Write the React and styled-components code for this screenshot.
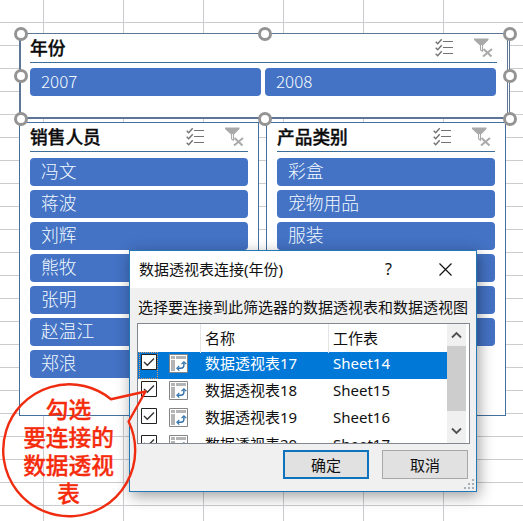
import React from 'react';
import styled, { createGlobalStyle } from 'styled-components';

const GlobalStyle = createGlobalStyle`
  * { box-sizing: border-box; }
  body { margin: 0; overflow: hidden; }
`;

const Worksheet = styled.main`
  position: relative;
  width: 523px;
  height: 521px;
  overflow: hidden;
  padding: 33px 0 0 19px;
  font-family: 'Noto Sans CJK SC', sans-serif;
  background-color: #fff;
  background-image:
    linear-gradient(90deg, #cbccd0 1px, transparent 1px),
    linear-gradient(#cbccd0 1px, transparent 1px);
  background-size: 80px 100%, 100% 23px;
  background-position: 43px 0, 0 22px;
`;

const SlicerRow = styled.div`
  display: flex;
  gap: 7px;
  margin-top: 3px;
`;

const Slicer = styled.section`
  position: relative;
  width: ${({ $wide }) => ($wide ? '491px' : '240px')};
  height: ${({ $wide }) => ($wide ? '86px' : '294px')};
  padding: 0 10px;
  background: #fff;
  border: 1px solid #44709f;
  ${({ $wide }) => $wide && `
    border-width: 1px 3px 2px 2px;
    border-style: solid double solid solid;
    border-color: #5d7695;
    padding: 0 10px 0 9px;
  `}
`;

const SlicerHeader = styled.header`
  display: flex;
  align-items: center;
  height: 29px;
  border-bottom: 1px solid #3f6f99;
`;

const SlicerTitle = styled.h2`
  flex: 1;
  margin: 0;
  padding-bottom: 2px;
  font-size: 17.7px;
  line-height: 26px;
  font-weight: 500;
  -webkit-text-stroke: 0.35px #0b0b0b;
  color: #0b0b0b;
`;

const HeaderIcons = styled.div`
  display: flex;
  gap: 20px;
  padding-right: 4px;
`;

const ItemList = styled.div`
  display: grid;
  grid-template-columns: repeat(${({ $columns }) => $columns}, 1fr);
  gap: 4px;
  margin-top: ${({ $columns }) => ($columns > 1 ? '5px' : '6px')};
  margin-right: ${({ $columns }) => ($columns > 1 ? '1px' : '0')};
`;

const SlicerItem = styled.button`
  height: 28px;
  border: 0;
  border-radius: 4px;
  padding: 0 0 3px 11px;
  background: #4472c4;
  color: #f2faff;
  font: 300 ${({ $compact }) => ($compact ? '17px' : '17.8px')}/25px 'Noto Sans CJK SC', sans-serif;
  text-align: left;
`;

const Handle = styled.i`
  position: absolute;
  left: ${({ $x }) => $x}px;
  top: ${({ $y }) => $y}px;
  width: 14px;
  height: 14px;
  border: 3px solid #949494;
  border-radius: 50%;
  background: #fff;
  z-index: 1;
`;

const Dialog = styled.div`
  position: absolute;
  left: 129px;
  top: 250px;
  width: 348px;
  height: 242px;
  display: flex;
  flex-direction: column;
  background: #f0f0f0;
  border: 1px solid #2078b4;
  box-shadow: 2px 4px 14px rgba(0, 0, 0, 0.38);
  font-family: 'Noto Sans', 'Noto Sans CJK SC', sans-serif;
  font-size: 15px;
  color: #101010;
  z-index: 2;
`;

const TitleBar = styled.div`
  display: flex;
  align-items: center;
  height: 37px;
  padding: 0 24px 1px 9px;
  background: #fff;
`;

const TitleText = styled.span`
  flex: 1;
  padding-bottom: 2px;
`;

const HelpMark = styled.span`
  width: 11px;
  margin-right: 43px;
  font-size: 16px;
`;

const Prompt = styled.p`
  margin: 8px 0 0 8px;
  height: 27px;
  line-height: 23px;
  white-space: nowrap;
`;

const ListBox = styled.div`
  display: flex;
  width: 333px;
  height: 121px;
  margin-left: 7px;
  background: #fff;
  border: 1px solid #828790;
  overflow: hidden;
`;

const Table = styled.div`
  flex: 1;
`;

const Row = styled.div`
  display: grid;
  grid-template-columns: 31px 31px 128px 1fr;
  height: ${({ $head }) => ($head ? 28 : 27)}px;
  background: ${({ $selected }) => ($selected ? '#0078d7' : 'transparent')};
  color: ${({ $selected }) => ($selected ? '#fff' : '#101010')};
  line-height: ${({ $head }) => ($head ? 29 : 23)}px;
  white-space: nowrap;
`;

const Cell = styled.div`
  padding-left: 4px;
  border-left: ${({ $divider }) => ($divider ? '1px solid #e5e5e5' : '1px solid transparent')};
`;

const CheckCell = styled.div`
  width: 19px;
  height: 27px;
  margin-left: 1px;
  padding: 1px 0 0 1px;
  border: 1px ${({ $focus }) => ($focus ? 'dotted #d89a62' : 'solid transparent')};
  line-height: 0;
`;

const IconCell = styled.div`
  padding: 2px 0 0 0;
  line-height: 0;
`;

const ScrollBar = styled.div`
  display: flex;
  flex-direction: column;
  align-items: center;
  width: 19px;
  margin-right: 3px;
  background: #f0f0f0;
`;

const ScrollButton = styled.div`
  display: grid;
  place-items: center;
  width: 19px;
  height: 22px;
`;

const Thumb = styled.div`
  width: 19px;
  height: 65px;
  background: #cdcdcd;
  margin-bottom: 9px;
`;

const ButtonBar = styled.div`
  display: flex;
  justify-content: flex-end;
  gap: 13px;
  padding: 6px 8px 0 0;
`;

const DialogButton = styled.button`
  width: 86px;
  height: 29px;
  padding: 0;
  background: #e1e1e1;
  border: ${({ $primary }) => ($primary ? '2px solid #0d73bd' : '1px solid #a8a8a8')};
  font: 15px/24px 'Noto Sans CJK SC', sans-serif;
  color: #101010;
`;

const SizeGrip = styled.svg`
  position: absolute;
  right: 1px;
  bottom: 1px;
`;

const Callout = styled.div`
  position: absolute;
  left: 0;
  top: 382px;
  width: 150px;
  height: 139px;
  padding: 13px 13px 0 0;
  text-align: center;
  color: #f52b0c;
  font-size: 22.7px;
  line-height: 28px;
  font-weight: 500;
  -webkit-text-stroke: 0.3px #f52b0c;
  z-index: 3;
`;

const Bubble = styled.svg`
  position: absolute;
  inset: 0;
`;

const CalloutLine = styled.div`
  position: relative;
`;

const MultiSelectIcon = () => (
  <svg width="19" height="20" viewBox="0 0 19 20" fill="none" stroke="#737373">
    <path d="M.7 3.8l2 2 4-4.6M.7 9.8l2 2 4-4.6M.7 15.8l2 2 4-4.6" strokeWidth="1.4" />
    <path d="M8 3.5h10M8 9.5h10M8 15.5h10" strokeWidth="1.1" />
  </svg>
);

const ClearFilterIcon = () => (
  <svg width="19" height="20" viewBox="0 0 19 20">
    <path d="M0 .5h14.5v1.5L9 7.5v6.7l-3-2V7.5L0 2z" fill="#a9a9a9" />
    <path d="M7.5 7v5" stroke="#f5f5f5" />
    <path d="M9.5 11l8 7.5M18 11l-9 7.5" fill="none" stroke="#aaa" strokeWidth="2" />
  </svg>
);

const CheckBoxIcon = () => (
  <svg width="16" height="16" viewBox="0 0 16 16">
    <path d="M.5.5h15v15H.5z" fill="#fff" stroke="#222" />
    <path d="M3 8l3.3 3.3L13 4.4" fill="none" stroke="#333" strokeWidth="1.4" />
  </svg>
);

const PivotIcon = () => (
  <svg width="19" height="19" viewBox="0 0 19 19">
    <path d="M.5.5h18v18H.5z" fill="#fff" stroke="#858585" />
    <path d="M2 2h4v3H2zM7 2h10v3H7zM2 6h4v11H2z" fill="#b4b4b4" />
    <path d="M9 14.2h2.7c2 0 3.2-1.2 3.2-3.2V8.8" fill="none" stroke="#2f70aa" strokeWidth="1.4" />
    <path d="M12.5 10.2l2.4-2.4 2.4 2.4M10.3 11.8l-2.4 2.4 2.4 2.4" fill="none" stroke="#2f70aa" strokeWidth="1.2" />
  </svg>
);

const Chevron = ({ down }) => (
  <svg width="11" height="8" viewBox="0 0 11 8" fill="none" stroke="#505050" strokeWidth="1.8">
    <path d={down ? 'M1 1.5l4.5 4.5L10 1.5' : 'M1 6.5L5.5 2 10 6.5'} />
  </svg>
);

function SlicerPanel({ title, items, wide, children }) {
  return (
    <Slicer $wide={wide}>
      <SlicerHeader>
        <SlicerTitle>{title}</SlicerTitle>
        <HeaderIcons>
          <MultiSelectIcon />
          <ClearFilterIcon />
        </HeaderIcons>
      </SlicerHeader>
      <ItemList $columns={wide ? 2 : 1}>
        {items.map((item) => <SlicerItem key={item} $compact={wide}>{item}</SlicerItem>)}
      </ItemList>
      {children}
    </Slicer>
  );
}

const handles = [[-7, -7], [237, -7], [482, -7], [-7, 35], [482, 35], [-7, 78], [237, 78], [482, 78]];
const people = ['冯文', '蒋波', '刘辉', '熊牧', '张明', '赵温江', '郑浪'];
const products = ['彩盒', '宠物用品', '服装', '日用品', '食品', '睡袋'];
const connections = [
  ['数据透视表17', 'Sheet14'],
  ['数据透视表18', 'Sheet15'],
  ['数据透视表19', 'Sheet16'],
  ['数据透视表20', 'Sheet17'],
];

export default function App() {
  return (
    <Worksheet>
      <GlobalStyle />
      <SlicerPanel wide title="年份" items={['2007', '2008']}>
        {handles.map(([x, y]) => <Handle key={`${x},${y}`} $x={x} $y={y} />)}
      </SlicerPanel>
      <SlicerRow>
        <SlicerPanel title="销售人员" items={people} />
        <SlicerPanel title="产品类别" items={products} />
      </SlicerRow>

      <Dialog role="dialog">
        <TitleBar>
          <TitleText>数据透视表连接(年份)</TitleText>
          <HelpMark>?</HelpMark>
          <svg width="13" height="13" viewBox="0 0 13 13" stroke="#111" strokeWidth="1.2">
            <path d="M.5.5l12 12M12.5.5l-12 12" />
          </svg>
        </TitleBar>
        <Prompt>选择要连接到此筛选器的数据透视表和数据透视图</Prompt>
        <ListBox>
          <Table>
            <Row $head>
              <Cell />
              <Cell />
              <Cell $divider>名称</Cell>
              <Cell $divider>工作表</Cell>
            </Row>
            {connections.map(([name, sheet], index) => (
              <Row key={name} $selected={index === 0}>
                <CheckCell $focus={index === 0}><CheckBoxIcon /></CheckCell>
                <IconCell><PivotIcon /></IconCell>
                <Cell>{name}</Cell>
                <Cell>{sheet}</Cell>
              </Row>
            ))}
          </Table>
          <ScrollBar>
            <ScrollButton><Chevron /></ScrollButton>
            <Thumb />
            <ScrollButton><Chevron down /></ScrollButton>
          </ScrollBar>
        </ListBox>
        <ButtonBar>
          <DialogButton $primary>确定</DialogButton>
          <DialogButton>取消</DialogButton>
        </ButtonBar>
        <SizeGrip width="12" height="12" viewBox="0 0 12 12" fill="#a8b0b8">
          <path d="M9 1h2v2H9zM5 5h2v2H5zM9 5h2v2H9zM1 9h2v2H1zM5 9h2v2H5zM9 9h2v2H9z" />
        </SizeGrip>
      </Dialog>

      <Callout>
        <Bubble width="150" height="139" viewBox="0 0 150 139">
          <path
            d="M111 17.22A66 66 0 1 0 128.6 39.53L145.5 9.5Z"
            fill="none"
            stroke="#f02c10"
            strokeWidth="2.4"
            strokeLinejoin="round"
          />
        </Bubble>
        <CalloutLine>勾选</CalloutLine>
        <CalloutLine>要连接的</CalloutLine>
        <CalloutLine>数据透视</CalloutLine>
        <CalloutLine>表</CalloutLine>
      </Callout>
    </Worksheet>
  );
}
